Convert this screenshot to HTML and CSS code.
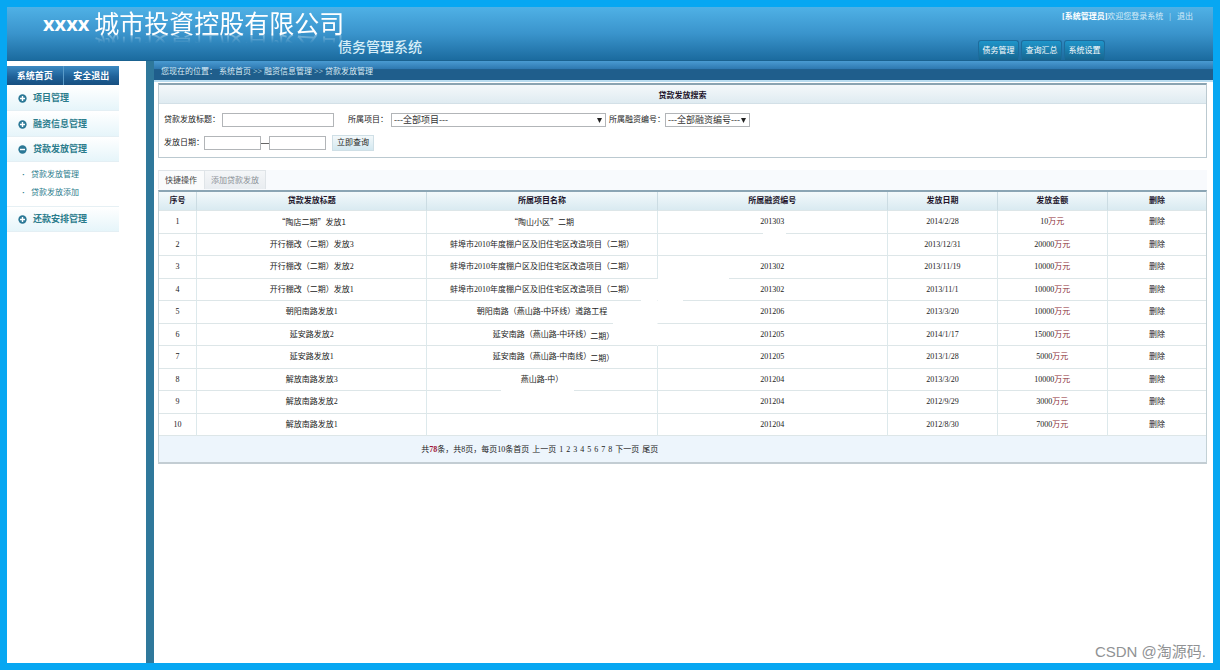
FILE: index.html
```html
<!DOCTYPE html>
<html lang="zh-CN">
<head>
<meta charset="utf-8">
<title>债务管理系统</title>
<link rel="stylesheet" href="styles.css">
</head>
<body>
<div class="page">
  <header class="top">
    <div class="brand">
      <h1 class="brand-name"><b>xxxx</b><span>城市投資控股有限公司</span></h1>
      <p class="brand-sub">债务管理系统</p>
    </div>
    <div class="top-side">
      <p class="user"><b>[系统管理员]</b>欢迎您登录系统<i>|</i><a href="#">退出</a></p>
      <nav class="modules"><a href="#">债务管理</a><a href="#">查询汇总</a><a href="#">系统设置</a></nav>
    </div>
  </header>

  <div class="body">
    <aside class="side">
      <div class="side-bar"><a href="#">系统首页</a><a href="#">安全退出</a></div>
      <nav class="menu">
        <a class="menu-item" href="#"><svg class="ico" viewBox="0 0 10 10"><circle cx="5" cy="5" r="4.6"/><path d="M5 2.2v5.6M2.2 5h5.6"/></svg>项目管理</a>
        <a class="menu-item" href="#"><svg class="ico" viewBox="0 0 10 10"><circle cx="5" cy="5" r="4.6"/><path d="M5 2.2v5.6M2.2 5h5.6"/></svg>融资信息管理</a>
        <a class="menu-item" href="#"><svg class="ico" viewBox="0 0 10 10"><circle cx="5" cy="5" r="4.6"/><path d="M2.2 5h5.6"/></svg>贷款发放管理</a>
        <ul class="submenu">
          <li><a href="#">贷款发放管理</a></li>
          <li><a href="#">贷款发放添加</a></li>
        </ul>
        <a class="menu-item" href="#"><svg class="ico" viewBox="0 0 10 10"><circle cx="5" cy="5" r="4.6"/><path d="M5 2.2v5.6M2.2 5h5.6"/></svg>还款安排管理</a>
      </nav>
    </aside>

    <main class="main">
      <div class="crumbs"><span>您现在的位置：</span><a href="#">系统首页</a><i>&gt;&gt;</i><a href="#">融资信息管理</a><i>&gt;&gt;</i><a href="#">贷款发放管理</a></div>
      <div class="content">
        <form class="search">
          <h2 class="search-title">贷款发放搜索</h2>
          <div class="search-body">
            <div class="line">
              <label for="t">贷款发放标题：</label><input class="in in-title" id="t" type="text">
              <label class="next" for="p">所属项目：</label><select class="sel sel-project" id="p"><option>---全部项目---</option></select>
              <label class="near" for="n">所属融资编号：</label><select class="sel sel-code" id="n"><option>---全部融资编号---</option></select>
            </div>
            <div class="line">
              <label for="d1">发放日期：</label><input class="in in-date" id="d1" type="text"><span class="dash"></span><input class="in in-date" id="d2" type="text" aria-label="结束日期">
              <button class="go" type="button">立即查询</button>
            </div>
          </div>
        </form>

        <div class="tabs"><a class="tab on" href="#">快捷操作</a><a class="tab" href="#">添加贷款发放</a></div>

        <table class="list">
          <colgroup><col class="c-no"><col class="c-wide"><col class="c-wide"><col class="c-wide"><col class="c-mid"><col class="c-mid"><col></colgroup>
          <thead><tr><th>序号</th><th>贷款发放标题</th><th>所属项目名称</th><th>所属融资编号</th><th>发放日期</th><th>发放金额</th><th>删除</th></tr></thead>
          <tbody>
            <tr><td>1</td><td class="full">“陶店二期”发放1</td><td class="full">“陶山小区”二期</td><td>201303<span class="fade fade-mid"></span></td><td>2014/2/28</td><td>10<em>万元</em></td><td><a href="#">删除</a></td></tr>
            <tr><td>2</td><td>开行棚改（二期）发放3</td><td>蚌埠市2010年度棚户区及旧住宅区改造项目（二期）</td><td></td><td>2013/12/31</td><td>20000<em>万元</em></td><td><a href="#">删除</a></td></tr>
            <tr><td>3</td><td>开行棚改（二期）发放2</td><td>蚌埠市2010年度棚户区及旧住宅区改造项目（二期）</td><td>201302<span class="fade fade-left"></span></td><td>2013/11/19</td><td>10000<em>万元</em></td><td><a href="#">删除</a></td></tr>
            <tr><td>4</td><td>开行棚改（二期）发放1</td><td class="open">蚌埠市2010年度棚户区及旧住宅区改造项目（二期）<span class="fade fade-end"></span></td><td>201302<span class="fade fade-start"></span></td><td>2013/11/1</td><td>10000<em>万元</em></td><td><a href="#">删除</a></td></tr>
            <tr><td>5</td><td>朝阳南路发放1</td><td class="open">朝阳南路（燕山路-中环线）道路工程<span class="fade fade-right"></span></td><td>201206</td><td>2013/3/20</td><td>10000<em>万元</em></td><td><a href="#">删除</a></td></tr>
            <tr><td>6</td><td>延安路发放2</td><td class="open">延安南路（燕山路-中环线）<span class="phase">二期）</span></td><td>201205</td><td>2014/1/17</td><td>15000<em>万元</em></td><td><a href="#">删除</a></td></tr>
            <tr><td>7</td><td>延安路发放1</td><td>延安南路（燕山路-中南线）<span class="phase">二期）</span></td><td>201205</td><td>2013/1/28</td><td>5000<em>万元</em></td><td><a href="#">删除</a></td></tr>
            <tr><td>8</td><td>解放南路发放3</td><td>燕山路-中）<span class="fade fade-center"></span></td><td>201204</td><td>2013/3/20</td><td>10000<em>万元</em></td><td><a href="#">删除</a></td></tr>
            <tr><td>9</td><td>解放南路发放2</td><td></td><td>201204</td><td>2012/9/29</td><td>3000<em>万元</em></td><td><a href="#">删除</a></td></tr>
            <tr><td>10</td><td>解放南路发放1</td><td></td><td>201204</td><td>2012/8/30</td><td>7000<em>万元</em></td><td><a href="#">删除</a></td></tr>
          </tbody>
        </table>
        <div class="pager"><span>共<b>78</b>条，共8页，每页10条首页</span><a href="#">上一页</a><a href="#">1</a><a href="#">2</a><a href="#">3</a><a href="#">4</a><a href="#">5</a><a href="#">6</a><a href="#">7</a><a href="#">8</a><a href="#">下一页</a><a href="#">尾页</a></div>
      </div>
    </main>
  </div>
  <p class="mark">CSDN @淘源码.</p>
</div>
</body>
</html>
```

FILE: styles.css
```css
* { box-sizing: border-box; }

body {
  margin: 0;
  font: 8px/12px "Liberation Serif", "Noto Sans CJK SC", sans-serif;
  color: #222;
}

h1, h2, p, ul { margin: 0; padding: 0; font-weight: normal; }
ul { list-style: none; }
a { color: inherit; text-decoration: none; }
i, em { font-style: normal; }

.page {
  position: relative;
  display: flex;
  flex-direction: column;
  min-height: 100vh;
  border: 7px solid #07a7f2;
  background: #fff;
}

/* header */
.top {
  display: flex;
  justify-content: space-between;
  height: 54px;
  background: linear-gradient(#4fb1e6, #3a94cc 50%, #1b6b9f);
  border-bottom: 1px solid #1a6290;
  color: #fff;
}
.brand { padding-left: 36px; }
.brand-name {
  display: flex;
  align-items: center;
  gap: 5px;
  height: 31px;
  font: 25px/31px "Noto Sans CJK SC", sans-serif;
}
.brand-name span { -webkit-box-reflect: below -7px linear-gradient(transparent 60%, rgba(255, 255, 255, .5)); }
.brand-name b { padding-top: 2px; font: bold 20px/29px "Open Sans", sans-serif; }
.brand-sub {
  padding-left: 295px;
  font: 500 14px/16px "Noto Sans CJK SC", sans-serif;
  color: #d6eef8;
}
.top-side {
  display: flex;
  flex-direction: column;
  justify-content: space-between;
  align-items: flex-start;
  width: 235px;
}
.user { padding: 4px 0 0 84px; color: #d5ecf8; white-space: nowrap; }
.user b { color: #fff; }
.user i { margin: 0 6px; }
.modules { display: flex; gap: 2px; }
.modules a {
  width: 41px;
  height: 20px;
  border: 1px solid #1d6c9c;
  border-bottom: 0;
  border-radius: 3px 3px 0 0;
  background: linear-gradient(#1f95ca, #17658f);
  line-height: 20px;
  text-align: center;
}

.body { display: flex; flex: 1; }

/* sidebar */
.side { width: 139px; padding: 5px 27px 0 0; }
.side-bar {
  display: flex;
  height: 19px;
  background: linear-gradient(#3c8ac2, #1f6299 55%, #174f80);
  color: #fff;
  font-weight: bold;
  font-size: 9px;
  line-height: 20px;
}
.side-bar a { flex: 1; text-align: center; }
.side-bar a + a { border-left: 1px solid #5a9bc8; }
.menu { color: #2b7c8c; font-size: 9px; }
.menu-item {
  display: flex;
  align-items: center;
  gap: 6px;
  height: 25px;
  padding-left: 11px;
  margin-top: 1px;
  border-bottom: 1px solid #e4eff4;
  background: linear-gradient(#fff, #e6f5fa);
  font-weight: bold;
}
.menu-item:nth-of-type(3) { margin-top: 0; }
.submenu + .menu-item { margin-top: 0; }
.ico { width: 9px; height: 9px; }
.ico circle { fill: #2b7896; }
.ico path { stroke: #fff; stroke-width: 1.6; }
.submenu { padding: 4px 0; border-bottom: 1px solid #e6f0f4; font-size: 8px; }
.submenu li { display: flex; height: 18px; align-items: center; padding-left: 15px; }
.submenu li::before { content: "·"; width: 9px; font-weight: bold; }

/* main column */
.main { flex: 1; min-width: 0; border-left: 8px solid #2f789b; }
.crumbs {
  display: flex;
  height: 19px;
  padding-left: 7px;
  background: linear-gradient(#4a9bd2, #2f7ab2 40%, #1f5e8c 45%, #1f5e8c);
  color: #d9ecf6;
  line-height: 22px;
}
.crumbs span { padding-right: 2px; }
.crumbs i { padding: 0 2px; }
.content { padding: 0 6px 0 4px; border-top: 2px solid #b9dcf0; }

/* search panel */
.search { border: 1px solid #bbc9d0; border-top: 2px solid #8aa3b1; margin-top: 1px; }
.search-title {
  height: 19px;
  background: linear-gradient(#f4f8fa, #dfebf1);
  border-bottom: 1px solid #d3e0e7;
  color: #21142a;
  font-size: 8px;
  font-weight: bold;
  line-height: 22px;
  text-align: center;
}
.search-body { padding: 8px 5px 6px; }
.line { display: flex; align-items: center; height: 16px; margin-bottom: 7px; white-space: nowrap; }
.line:last-child { margin-bottom: 0; }
.in { height: 14px; padding: 0 2px; border: 1px solid #b2b5b8; background: #fff; font: inherit; }
.in-title { width: 112px; margin-left: 2px; }
.in-date { width: 57px; }
.dash { width: 8px; border-top: 1px solid #666; }
.next { margin-left: 14px; }
.near { margin-left: 3px; }
.sel {
  appearance: none;
  height: 14px;
  padding: 0 0 0 2px;
  border: 1px solid #b2b5b8;
  border-radius: 0;
  background: #fff url("data:image/svg+xml,%3Csvg xmlns='http://www.w3.org/2000/svg' width='5' height='5'%3E%3Cpath d='M0 0h5L2.5 5z' fill='%23222'/%3E%3C/svg%3E") no-repeat right 3px center;
  font: 9px/12px "Liberation Serif", "Noto Sans CJK SC", sans-serif;
  color: #333;
}
.sel-project { width: 215px; margin-left: 3px; }
.sel-code { width: 85px; }
.go {
  width: 42px;
  height: 16px;
  margin-left: 6px;
  padding: 0;
  border: 1px solid #cfdfe6;
  background: linear-gradient(#f3f8fa, #d3e8f0);
  color: #222;
  font: inherit;
}

/* tabs */
.tabs { display: flex; height: 20px; margin-top: 12px; background: #f8fafd; }
.tab {
  height: 19px;
  padding: 0 6px;
  border: 1px solid #dfe4e8;
  border-left: 0;
  border-bottom: 0;
  background: linear-gradient(#f4f6f8, #e8ecf0);
  color: #8b9196;
  line-height: 19px;
}
.tab.on { padding: 0 7px 0 6px; border-left: 1px solid #e6e9ec; background: #fafbfc; color: #444; }

/* list */
.list {
  width: 100%;
  table-layout: fixed;
  border-collapse: separate;
  border-spacing: 0;
  border: 1px solid #c3d1d6;
  border-top: 2px solid #8ba5b4;
  border-bottom: 0;
}
.c-no { width: 38px; }
.c-wide { width: 22%; }
.c-mid { width: 10.5%; }
.list th, .list td {
  position: relative;
  padding: 0;
  border-right: 1px solid #dde9ec;
  border-bottom: 1px solid #dde6e8;
  text-align: center;
  white-space: nowrap;
}
.list th:last-child, .list td:last-child { border-right: 0; }
.list th {
  height: 19px;
  background: linear-gradient(#f3f9fb, #d9eaf1);
  border-right-color: #cbdce3;
  color: #21142a;
}
.list tr:nth-child(odd) td { height: 23px; }
.list tr:nth-child(even) td { height: 22px; }
.list em { color: #8c2d35; }
.list .full { font-family: "Noto Sans CJK SC", sans-serif; }
.list .open { border-right-color: #fff; }
.phase { position: absolute; top: 7px; left: 71%; }

/* worn stretches of the row rules */
.fade { position: absolute; bottom: -1px; height: 1px; background: #fff; }
.fade-mid { left: 46%; width: 10%; }
.fade-left { left: 0; width: 31%; }
.fade-end { right: 0; width: 7%; }
.fade-start { left: 0; width: 11%; }
.fade-right { right: 0; width: 19%; }
.fade-center { left: 32%; width: 32%; }

.pager {
  display: flex;
  gap: 3px;
  height: 28px;
  padding-left: 25%;
  border: 1px solid #c3d1d6;
  border-top: 0;
  border-bottom: 2px solid #c3cdd3;
  background: #edf5fc;
  line-height: 28px;
  white-space: nowrap;
}
.pager b { color: #a01437; }

.mark {
  position: absolute;
  right: 7px;
  bottom: 0;
  color: #909294;
  font: 15px/22px "Liberation Sans", "Noto Sans CJK SC", sans-serif;
}
```
